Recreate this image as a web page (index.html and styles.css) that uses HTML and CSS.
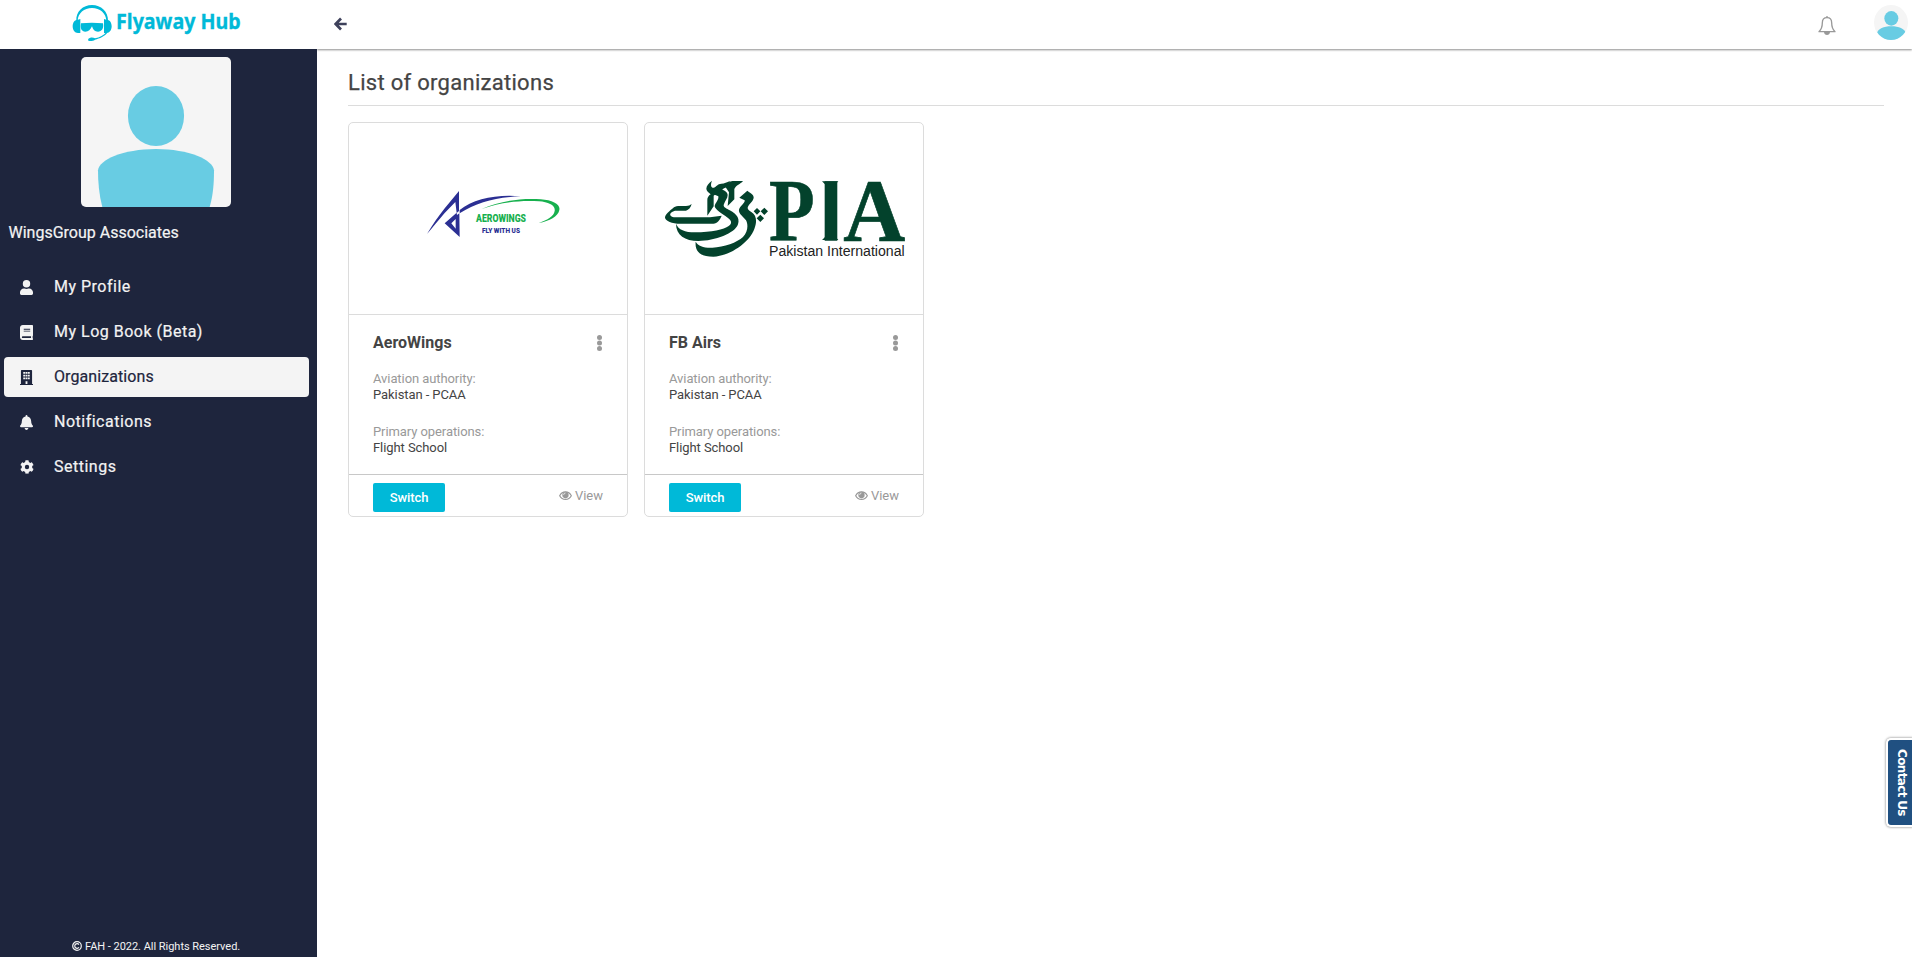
FILE: index.html
```html
<!DOCTYPE html>
<html lang="en">
<head>
<meta charset="utf-8">
<title>Flyaway Hub</title>
<link rel="stylesheet" href="styles.css">
</head>
<body>
<div class="app">
  <aside class="sidebar">
    <a class="brand">
      <svg class="brand-logo" viewBox="216 0 540 147" width="180" height="49">
        <g fill="#00b9d8">
          <path d="M229 62C227 35 249 15 276 15s49 20 48 47h-5C318 40 300 24 276 24s-42 16-43 38z"/>
          <path d="M241 57v42h-7c-10 0-16-9-16-20 0-12 6-20 16-20zM312 57v42h7c10 0 16-9 16-20 0-12-6-20-16-20z"/>
          <path d="M243 70q32-4 66 0c3 16-4 25-15 25-10 0-15-6-18-16-5 10-10 16-20 16-11 0-16-9-13-25z"/>
          <path d="M323 97c-8 12-24 19-38 22-7 5-14 5-20 3-2-5 1-8 6-9 6-1 10 0 14 2 14-3 27-9 34-19z"/>
        </g>
        <text class="brand-text" x="348" y="88" textLength="374" lengthAdjust="spacingAndGlyphs">Flyaway Hub</text>
      </svg>
    </a>
    <div class="profile">
      <svg class="profile-photo" viewBox="0 0 450 450" width="150" height="150">
        <rect width="450" height="450" fill="#f5f5f5"/>
        <rect x="141" y="87" width="168" height="180" rx="84" ry="88" fill="#68cce3"/>
        <path d="M64 450C54 413 51 375 51 340c2-31 75-64 174-64s172 33 174 64c0 35-2 73-13 110z" fill="#68cce3"/>
      </svg>
      <div class="profile-name">WingsGroup Associates</div>
    </div>
    <nav class="nav">
      <a class="nav-item">
        <svg class="nav-icon" viewBox="0 0 448 512"><path d="M224 256a128 128 0 1 0 0-256 128 128 0 0 0 0 256zm90 32h-17a174 174 0 0 1-146 0h-17C60 288 0 348 0 422v42c0 27 21 48 48 48h352c27 0 48-21 48-48v-42c0-74-60-134-134-134z"/></svg>
        <span>My Profile</span>
      </a>
      <a class="nav-item">
        <svg class="nav-icon" viewBox="0 0 448 512"><path fill-rule="evenodd" d="M448 360V24c0-13-11-24-24-24H96C43 0 0 43 0 96v320c0 53 43 96 96 96h328c13 0 24-11 24-24v-16c0-8-4-14-9-19-4-15-4-59 0-74 5-4 9-11 9-19zM128 134c0-3 3-6 6-6h212c3 0 6 3 6 6v20c0 3-3 6-6 6H134c-3 0-6-3-6-6zm0 64c0-3 3-6 6-6h212c3 0 6 3 6 6v20c0 3-3 6-6 6H134c-3 0-6-3-6-6zm253 250H96a32 32 0 0 1 0-64h285c-2 17-2 47 0 64z"/></svg>
        <span>My Log Book (Beta)</span>
      </a>
      <a class="nav-item active">
        <svg class="nav-icon" viewBox="0 0 448 512"><path fill-rule="evenodd" d="M436 480h-20V24c0-13-11-24-24-24H56C43 0 32 11 32 24v456H12c-7 0-12 5-12 12v20h448v-20c0-7-5-12-12-12zM112 64h64v64h-64zm80 0h64v64h-64zm80 0h64v64h-64zM112 160h64v64h-64zm80 0h64v64h-64zm80 0h64v64h-64zM112 256h64v64h-64zm80 0h64v64h-64zm80 0h64v64h-64zM192 384h64v96h-64z"/></svg>
        <span>Organizations</span>
      </a>
      <a class="nav-item">
        <svg class="nav-icon" viewBox="0 0 448 512"><path d="M224 512c35 0 64-29 64-64H160c0 35 29 64 64 64zm215-150c-19-21-55-52-55-154 0-78-54-140-128-155V32a32 32 0 0 0-64 0v21C118 68 64 130 64 208c0 102-36 133-55 154-6 6-9 14-9 22 0 16 13 32 32 32h384c19 0 32-16 32-32 0-8-3-16-9-22z"/></svg>
        <span>Notifications</span>
      </a>
      <a class="nav-item">
        <svg class="nav-icon gear" viewBox="0 0 512 512"><path fill-rule="evenodd" d="M487 316l-42-25c4-23 4-47 0-70l42-25c5-3 8-9 6-14-11-36-30-68-55-95-4-4-10-5-15-2l-42 24c-18-15-39-27-61-35V26c0-6-4-11-10-12-36-8-74-8-109 0-6 1-10 6-10 12v48c-22 8-43 20-61 35L88 85c-5-3-11-2-15 2-25 27-44 59-55 95-2 5 1 11 6 14l42 25c-4 23-4 47 0 70l-42 25c-5 3-8 9-6 14 11 36 30 68 55 95 4 4 10 5 15 2l42-24c18 15 39 27 61 35v48c0 6 4 11 10 12 36 8 74 8 109 0 6-1 10-6 10-12v-48c22-8 43-20 61-35l42 24c5 3 11 2 15-2 25-27 44-59 55-95 2-5-1-11-6-14zM256 336a80 80 0 1 1 0-160 80 80 0 0 1 0 160z"/></svg>
        <span>Settings</span>
      </a>
    </nav>
    <footer class="copyright">
      <svg viewBox="0 0 20 20" width="10" height="10"><g fill="none" stroke="currentColor" stroke-width="2.4"><circle cx="10" cy="10" r="8.6"/><path d="M13.8 7.2a4.6 4.6 0 1 0 0 5.6"/></g></svg>
      <span>FAH - 2022. All Rights Reserved.</span>
    </footer>
  </aside>

  <div class="page">
    <header class="topbar">
      <svg class="back" viewBox="0 0 13 14" width="13" height="14"><path d="M7 1.5L1.6 7 7 12.5M2 7h10.7" fill="none" stroke="#3e415b" stroke-width="2.7"/></svg>
      <div class="topbar-actions">
        <svg viewBox="0 0 54 57" width="18" height="19"><path d="M3 47c7-7 10-14 10-27C13 10 19 5 27 5s14 5 14 15c0 13 3 20 10 27z" fill="none" stroke="#999" stroke-width="4" stroke-linejoin="round"/><path d="M25 0h4v5h-4zM18 48h18c0 12-18 12-18 0z" fill="#999"/></svg>
        <svg class="avatar" viewBox="0 0 102 105" width="34" height="35"><rect width="102" height="105" fill="#f5f5f5"/><ellipse cx="52" cy="40" rx="21" ry="22" fill="#68cce3"/><path d="M10 82c2-10 19-18 42-18s40 8 42 18c0 12-7 30-20 30H28C16 112 10 92 10 82z" fill="#68cce3"/></svg>
      </div>
    </header>

    <main class="content">
      <h1 class="title">List of organizations</h1>
      <div class="cards">
        <article class="card">
          <svg class="card-image" viewBox="27 219 834 573" width="278" height="191">
            <g fill="#2b2f93">
              <path d="M357 423v60l-7 6-4-33-32 33c-19 22-36 43-53 63 17-29 36-56 52-76z"/>
              <path d="M314 520l36-32 1 7 7-5 1 71zm20 0l13 16v-29z" fill-rule="evenodd"/>
              <path d="M359 480c42-34 113-48 184-41-73 2-131 17-184 51z"/>
            </g>
            <path d="M425 477c56-25 121-33 177-29 36 2 60 16 56 32-4 20-29 33-62 39 28-9 45-20 48-36 3-17-19-27-47-29-52-4-112 2-172 23z" fill="#17b04e"/>
            <text class="aero-name" x="408" y="515" textLength="150" lengthAdjust="spacingAndGlyphs">AEROWINGS</text>
            <text class="aero-tag" x="426" y="549" textLength="114" lengthAdjust="spacingAndGlyphs">FLY WITH US</text>
          </svg>
          <div class="card-body">
            <div class="card-head"><h2>AeroWings</h2><svg viewBox="0 0 5 16" width="5" height="16"><g fill="#999"><circle cx="2.5" cy="2.5" r="2.5"/><circle cx="2.5" cy="8" r="2.5"/><circle cx="2.5" cy="13.5" r="2.5"/></g></svg></div>
            <dl class="facts"><dt>Aviation authority:</dt><dd>Pakistan - PCAA</dd><dt>Primary operations:</dt><dd>Flight School</dd></dl>
          </div>
          <div class="card-foot">
            <button class="switch">Switch</button>
            <a class="view"><svg viewBox="0 0 39 27" width="13" height="9"><path d="M2 14C10-1 29-1 37 14 29 29 10 29 2 14z" fill="none" stroke="#999" stroke-width="3.500"/><circle cx="19.500" cy="12" r="9.500" fill="#999"/><path d="M14 12a5.500 5.500 0 0 1 5.500-6" fill="none" stroke="#fff" stroke-width="2"/></svg><span>View</span></a>
          </div>
        </article>

        <article class="card">
          <svg class="card-image" viewBox="15 -81 834 573" width="278" height="191">
            <g fill="#03422c" transform="translate(60 75)">
              <path d="M95 87C92 98 86 105 78 107H45C34 110 28 116 32 122c4 5 13 5 23 5h95l35-5c-5 12-13 23-25 24H62C35 146 17 138 15 128c0-8 13-20 27-31 4-3 10-4 18-4h18c8 0 12-3 17-6z"/>
              <path d="M48 146C48 180 75 198 115 198c50 0 110-23 119-50 8-23-12-36-28-44-10-5-18-9-14-17 3-9 11-17 11-27 0-10-12-15-27-22L157 56l18 8c2 10-8 18-11 29 0 10 21 22 39 35 11 8 15 16 3 25-14 11-51 19-101 19-30 0-50-8-57-26z"/>
              <path d="M107 200c-3 31 15 45 53 45 50-2 108-42 123-83 8-22 8-40-9-51-9-6-14-10-9-18 6-9 16-16 16-26 0-9-9-12-19-20l-24 21 16 8c2 8-15 18-17 28-2 11 12 20 21 32 7 13 6 33-9 50-17 16-57 31-92 32-26 1-42-5-50-18z"/>
              <path d="M156 17c-9 7-17 15-17 24 0 7 7 11 13 17-6 4-10 10-10 16v48l19-28V62c8-7 19-12 31-22 8-1 13-12 18-22-10 4-16 8-26 8-11 0-15 9-22 12-8 2-12-7-6-21z"/>
              <path d="M249 18h-31c-10 0-16 9-21 19l10 15-4 41 20-20V42c5-12 18-14 26-24z"/>
              <path d="M291 99l10 10-10 10-10-10zM313 98l11 11-11 11-11-11zM301 119l11 11-11 11-11-11z"/>
            </g>
            <g class="pia">
              <text x="387" y="270" textLength="137" lengthAdjust="spacingAndGlyphs">P</text>
              <text class="pia-i" x="537" y="270">I</text>
              <text x="610" y="270" textLength="186" lengthAdjust="spacingAndGlyphs">A</text>
            </g>
            <path d="M546 94h49l-8 9h-32zM546 270h49l-8-9h-32z" fill="#03422c"/>
            <text class="pia-sub" x="387" y="319" textLength="407" lengthAdjust="spacingAndGlyphs">Pakistan International</text>
          </svg>
          <div class="card-body">
            <div class="card-head"><h2>FB Airs</h2><svg viewBox="0 0 5 16" width="5" height="16"><g fill="#999"><circle cx="2.5" cy="2.5" r="2.5"/><circle cx="2.5" cy="8" r="2.5"/><circle cx="2.5" cy="13.5" r="2.5"/></g></svg></div>
            <dl class="facts"><dt>Aviation authority:</dt><dd>Pakistan - PCAA</dd><dt>Primary operations:</dt><dd>Flight School</dd></dl>
          </div>
          <div class="card-foot">
            <button class="switch">Switch</button>
            <a class="view"><svg viewBox="0 0 39 27" width="13" height="9"><path d="M2 14C10-1 29-1 37 14 29 29 10 29 2 14z" fill="none" stroke="#999" stroke-width="3.500"/><circle cx="19.500" cy="12" r="9.500" fill="#999"/><path d="M14 12a5.500 5.500 0 0 1 5.500-6" fill="none" stroke="#fff" stroke-width="2"/></svg><span>View</span></a>
          </div>
        </article>
      </div>
    </main>
  </div>
</div>
<a class="contact">Contact Us</a>
</body>
</html>
```

FILE: styles.css
```css
* { box-sizing: border-box; }
body { margin: 0; font-family: Roboto, sans-serif; color: #444; background: #fff; overflow: hidden; }
svg { display: block; flex: none; }
h1, h2, dl, dd { margin: 0; }

.app { display: flex; height: 957px; }
.sidebar { width: 317px; flex: none; display: flex; flex-direction: column; position: relative; z-index: 1; background: #1e253d; color: #f3f3f3; }
.brand { height: 49px; flex: none; background: #fff; padding-left: 72px; }
.brand-text { font: 700 62px "Noto Sans", sans-serif; fill: #00b9d8; stroke: #00b9d8; stroke-width: 1px; }

.profile-photo { margin: 8px 0 0 81px; border-radius: 5px; }
.profile-name { margin: 15px 0 0 8.5px; font-size: 16px; line-height: 22px; -webkit-text-stroke: .2px currentColor; }

.nav { display: flex; flex-direction: column; gap: 5px; padding: 23px 8px 0 4px; }
.nav-item { display: flex; align-items: center; height: 40px; border-radius: 4px; padding-left: 16px; font-size: 16px; letter-spacing: .5px; line-height: 20px; -webkit-text-stroke: .2px currentColor; }
.nav-icon { width: 13px; height: 15px; margin-right: 21px; fill: currentColor; }
.nav-icon.gear { width: 14px; height: 14px; margin-right: 20px; }
.active { background: #f4f4f4; color: #1e253d; letter-spacing: .08px; }

.copyright { margin-top: auto; height: 22px; display: flex; align-items: center; gap: 3px; padding-left: 72px; font-size: 11px; letter-spacing: -.03px; }

.page { flex: 1; display: flex; flex-direction: column; }
.topbar { height: 49px; display: flex; align-items: center; justify-content: space-between; padding: 0 4px 0 17px; box-shadow: 0 1px 2px rgba(0, 0, 0, .45); }
.back { margin-bottom: 1px; }
.topbar-actions { display: flex; align-items: center; gap: 38px; padding-bottom: 4px; }
.topbar-actions svg:first-child { margin-top: 6px; }
.avatar { border-radius: 50%; }

.content { padding: 18px 28px 0 31px; }
.title { height: 39px; font-size: 22px; font-weight: 400; line-height: 31px; letter-spacing: .29px; border-bottom: 1px solid #dcdcdc; -webkit-text-stroke: .25px currentColor; }
.cards { display: flex; gap: 16px; margin-top: 16px; }
.card { width: 280px; height: 395px; border: 1px solid #dcdcdc; border-radius: 5px; display: flex; flex-direction: column; }
.card-image { border-bottom: 1px solid #dcdcdc; box-sizing: content-box; }
.card-body { height: 159px; padding: 16px 24px 0; }
.card-head { display: flex; justify-content: space-between; align-items: center; padding-right: 1.5px; }
.card-head h2 { font-size: 16px; line-height: 24px; font-weight: 700; }
.facts { margin-top: 16px; font-size: 13px; line-height: 16px; letter-spacing: -.08px; }
.facts dt { color: #999; }
.facts dd + dt { margin-top: 21px; }
.card-foot { flex: 1; display: flex; justify-content: space-between; align-items: flex-start; padding: 8px 24px 0; border-top: 1px solid #c8c8c8; }
.switch { width: 72px; height: 29px; border: 0; border-radius: 2px; padding: 0; background: #00b9d8; color: #fff; font: 500 13px Roboto, sans-serif; letter-spacing: -.1px; }
.view { display: flex; align-items: center; gap: 3px; color: #999; font-size: 13px; line-height: 16px; margin-top: 4px; }
.view span { padding-top: 1px; }

.aero-name { font: 900 31px Roboto, sans-serif; fill: #17b04e; }
.aero-tag { font: 900 24px Roboto, sans-serif; fill: #2b2f93; }
.pia { font: 700 268px "Liberation Serif", serif; fill: #03422c; stroke: #03422c; stroke-width: 2px; }
.pia-i { font: 700 243px Lato, sans-serif; stroke-width: 5px; }
.pia-sub { font: 42px "Liberation Sans", sans-serif; fill: #222; }

.contact { position: absolute; right: 0; top: 738px; width: 26px; height: 89px; padding-left: 4px; display: flex; align-items: center; justify-content: center; writing-mode: vertical-rl; font: 700 12px "DejaVu Sans", sans-serif; letter-spacing: -.65px; color: #fff; background: #205081; border: 2px solid #fff; border-right: 0; border-radius: 5px 0 0 5px; box-shadow: 0 0 2px 1px rgba(0, 0, 0, .25); }
```
